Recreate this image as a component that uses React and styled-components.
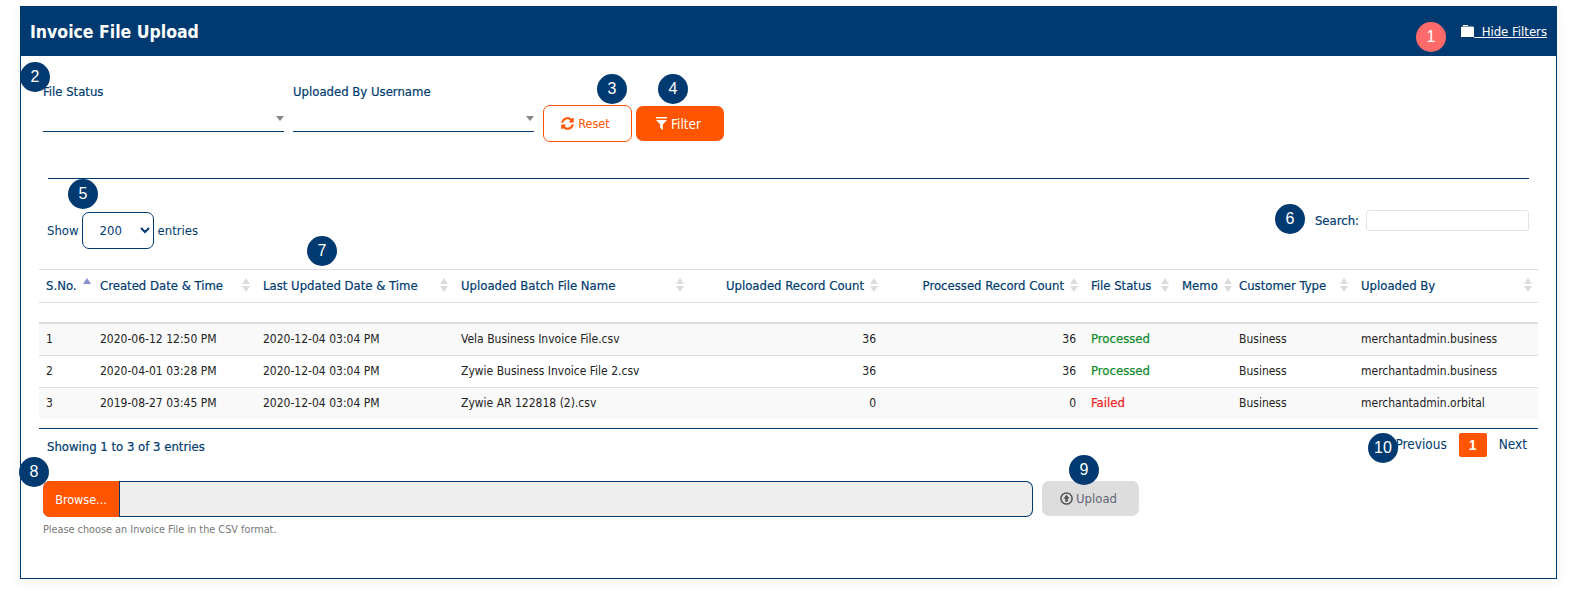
import styled, { createGlobalStyle } from "styled-components";
import { FaSyncAlt } from "react-icons/fa";

const NAVY = "#003a70";
const ORANGE = "#ff5500";

const GlobalStyle = createGlobalStyle`
  html, body { margin: 0; padding: 0; background: #fff; }
  body {
    font-family: "DejaVu Sans Condensed", "DejaVu Sans", sans-serif;
    font-stretch: condensed;
    font-size: 12px;
    color: #222;
  }
`;

const Page = styled.div`
  position: relative;
  width: 1578px;
  height: 601px;
  padding: 6px 21px 0 20px;
  box-sizing: border-box;
  overflow: hidden;
`;

const Panel = styled.section`
  position: relative;
  height: 573px;
  box-sizing: border-box;
  border: 1px solid ${NAVY};
  box-shadow: 0 4px 14px rgba(0, 0, 0, 0.06);
`;

const Header = styled.header`
  height: 49px;
  box-sizing: border-box;
  background: ${NAVY};
  display: flex;
  align-items: center;
  justify-content: space-between;
  padding: 0 9px;
`;

const Title = styled.h1`
  margin: 0;
  color: #fff;
  font-size: 17.5px;
  font-weight: 700;
`;

const HideLink = styled.a`
  color: #fff;
  font-size: 13px;
  text-decoration: underline;
  white-space: pre;
  svg { vertical-align: -1px; }
`;

const FilterRow = styled.div`
  display: flex;
  align-items: flex-start;
  padding: 27px 0 0 22px;
  height: 122px;
  box-sizing: border-box;
`;

const Field = styled.div`
  width: 241px;
  margin-right: 9px;
`;

const FieldLabel = styled.label`
  display: block;
  color: ${NAVY};
  font-size: 13px;
  height: 39px;
  line-height: 18px;
  -webkit-text-stroke: 0.2px ${NAVY};
`;

const FakeSelect = styled.div`
  position: relative;
  height: 9px;
  border-bottom: 1px solid ${NAVY};
  &::after {
    content: "";
    position: absolute;
    right: 0;
    top: -6px;
    border: 4px solid transparent;
    border-top: 5px solid #888;
  }
`;

const ResetButton = styled.button`
  width: 89px;
  height: 37px;
  margin-top: 22px;
  padding: 0 4px 0 0;
  border: 1px solid ${ORANGE};
  border-radius: 7px;
  background: #fff;
  color: ${ORANGE};
  font: inherit;
  font-size: 12.5px;
  display: flex;
  align-items: center;
  justify-content: center;
  gap: 4px;
`;

const FilterButton = styled.button`
  width: 88px;
  height: 35px;
  margin: 23px 0 0 4px;
  padding: 0 3px 0 0;
  border: 0;
  border-radius: 7px;
  background: ${ORANGE};
  color: #fff;
  font: inherit;
  font-size: 13.5px;
  display: flex;
  align-items: center;
  justify-content: center;
  gap: 4px;
`;

const Rule = styled.hr`
  margin: 0 27px;
  border: 0;
  border-top: 1px solid ${NAVY};
`;

const Controls = styled.div`
  display: flex;
  justify-content: space-between;
  padding: 31px 27px 0 26px;
  height: 90px;
  box-sizing: border-box;
  color: ${NAVY};
`;

const Length = styled.div`
  display: flex;
  align-items: center;
  gap: 4px;
  height: 37px;
  margin-top: 2px;
  font-size: 13px;
`;

const LengthSelect = styled.select`
  width: 72px;
  height: 37px;
  margin-left: -1px;
  box-sizing: border-box;
  border: 1px solid ${NAVY};
  border-radius: 7px;
  background: #fff;
  color: ${NAVY};
  font: inherit;
  padding-left: 13px;
`;

const SearchBox = styled.label`
  display: flex;
  align-items: center;
  gap: 7px;
  height: 21px;
  font-size: 13px;
  -webkit-text-stroke: 0.2px ${NAVY};
`;

const SearchInput = styled.input`
  width: 163px;
  height: 21px;
  box-sizing: border-box;
  border: 1px solid #e3e3e3;
  border-radius: 3px;
`;

const TableArea = styled.div`
  padding: 0 18px;
`;

const Table = styled.table`
  width: 1499px;
  table-layout: fixed;
  border-collapse: collapse;
  border-top: 1px solid #ddd;
`;

const HeadCell = styled.th`
  height: 33px;
  padding: 0 6px 2px 7px;
  box-sizing: border-box;
  border-bottom: 1px solid #ddd;
  color: ${NAVY};
  font-size: 13px;
  font-weight: 400;
  -webkit-text-stroke: 0.2px ${NAVY};
  text-align: left;
`;

const HeadInner = styled.div`
  display: flex;
  align-items: center;
  justify-content: ${({ $right }) => ($right ? "flex-end" : "space-between")};
  gap: 6px;
  white-space: nowrap;
`;

const SortIcon = styled.span`
  display: inline-flex;
  flex-direction: column;
  gap: 2px;
  width: 8px;
  flex: none;
  &::before, &::after {
    content: "";
    width: 0;
    height: 0;
    border-left: 4px solid transparent;
    border-right: 4px solid transparent;
  }
  &::before {
    border-bottom: 6px solid ${({ $active }) => ($active ? "#8a8fd0" : "#dcdcdc")};
  }
  &::after {
    border-top: 6px solid ${({ $active }) => ($active ? "transparent" : "#dcdcdc")};
  }
`;

const SpacerCell = styled.td`
  height: 19px;
  padding: 0;
  border-bottom: 2px solid #ddd;
`;

const Row = styled.tr`
  background: ${({ $odd }) => ($odd ? "#f9f9f9" : "#fff")};
  &:not(:last-child) td { border-bottom: 1px solid #ddd; }
`;

const Cell = styled.td`
  height: 32px;
  box-sizing: border-box;
  padding: 0 8px ${({ $status }) => ($status ? "2px" : "0")} 7px;
  color: ${({ $status }) =>
    $status === "Processed" ? "#0a8a2a" : $status === "Failed" ? "#f02020" : "#222"};
  font-size: ${({ $status }) => ($status ? "13px" : "12px")};
  -webkit-text-stroke: ${({ $status }) => ($status ? "0.2px" : "0")};
  text-align: ${({ $right }) => ($right ? "right" : "left")};
  white-space: nowrap;
`;

const TableFoot = styled.div`
  border-top: 1px solid ${NAVY};
  margin-top: 9px;
  display: flex;
  justify-content: space-between;
  padding: 4px 11px 0 8px;
  height: 53px;
  box-sizing: border-box;
  color: ${NAVY};
`;

const Info = styled.div`
  font-size: 13px;
  -webkit-text-stroke: 0.2px ${NAVY};
  padding-top: 6px;
`;

const Pager = styled.nav`
  display: flex;
  align-items: center;
  height: 24px;
  gap: 12px;
  font-size: 13.5px;
`;

const PageLink = styled.span`
  margin-bottom: 2px;
`;

const PageCurrent = styled.span`
  width: 28px;
  height: 24px;
  border-radius: 2px;
  background: ${ORANGE};
  color: #fff;
  font-family: "Liberation Sans", sans-serif;
  font-size: 14px;
  font-weight: 700;
  display: flex;
  align-items: center;
  justify-content: center;
`;

const UploadRow = styled.div`
  display: flex;
  align-items: flex-start;
  padding: 0 0 0 22px;
  gap: 9px;
`;

const FileBox = styled.div`
  width: 990px;
  height: 36px;
  box-sizing: border-box;
  display: flex;
  border: 1px solid ${NAVY};
  border-left: 0;
  border-radius: 7px;
  background: #eee;
`;

const BrowseButton = styled.span`
  width: 76px;
  margin: -1px 0;
  border-right: 1px solid ${NAVY};
  border-radius: 7px 0 0 7px;
  background: ${ORANGE};
  color: #fff;
  font-size: 12.5px;
  display: flex;
  align-items: center;
  justify-content: center;
`;

const UploadButton = styled.button`
  width: 97px;
  height: 35px;
  padding: 0 4px 0 0;
  border: 0;
  border-radius: 7px;
  background: #ddd;
  color: #66667a;
  font: inherit;
  font-size: 13px;
  display: flex;
  align-items: center;
  justify-content: center;
  gap: 3px;
`;

const HelpText = styled.p`
  margin: 6px 0 0 22px;
  color: #777;
  font-size: 10.8px;
`;

const Badge = styled.span`
  position: absolute;
  left: ${({ $x }) => $x}px;
  top: ${({ $y }) => $y}px;
  width: 30px;
  height: 30px;
  border-radius: 50%;
  background: ${({ $red }) => ($red ? "#ff6b6b" : NAVY)};
  color: #fff;
  font-family: "Liberation Sans", sans-serif;
  font-size: 16px;
  display: flex;
  align-items: center;
  justify-content: center;
`;

const FolderIcon = () => (
  <svg width="13" height="12" viewBox="0 0 13 12" fill="#fff">
    <path d="M2 0h5v1H2zM0 2h13v10H0z" />
    <path d="M1 1h11v.5H1z" />
  </svg>
);

const FunnelIcon = () => (
  <svg width="11" height="13" viewBox="0 0 11 13" fill="#fff">
    <path d="M0 0h11v1.5H0zM0 3h11L6.8 7.6V13L4.2 11V7.6z" />
  </svg>
);

const UploadIcon = () => (
  <svg width="13" height="13" viewBox="0 0 13 13">
    <circle cx="6.5" cy="6.5" r="5.6" fill="none" stroke="#555" strokeWidth="1.5" />
    <path d="M6.5 2.8L9.6 6.4H7.8V9.8H5.2V6.4H3.4z" fill="#555" />
  </svg>
);

const columns = [
  { label: "S.No.", width: 54, active: true },
  { label: "Created Date & Time", width: 163 },
  { label: "Last Updated Date & Time", width: 198 },
  { label: "Uploaded Batch File Name", width: 236 },
  { label: "Uploaded Record Count", width: 194, right: true },
  { label: "Processed Record Count", width: 200, right: true },
  { label: "File Status", width: 91 },
  { label: "Memo", width: 57 },
  { label: "Customer Type", width: 122 },
  { label: "Uploaded By", width: 184 },
];

const rows = [
  ["1", "2020-06-12 12:50 PM", "2020-12-04 03:04 PM", "Vela Business Invoice File.csv", "36", "36", "Processed", "", "Business", "merchantadmin.business"],
  ["2", "2020-04-01 03:28 PM", "2020-12-04 03:04 PM", "Zywie Business Invoice File 2.csv", "36", "36", "Processed", "", "Business", "merchantadmin.business"],
  ["3", "2019-08-27 03:45 PM", "2020-12-04 03:04 PM", "Zywie AR 122818 (2).csv", "0", "0", "Failed", "", "Business", "merchantadmin.orbital"],
];

const badges = [
  { n: 1, x: 1416, y: 22, red: true },
  { n: 2, x: 20, y: 62 },
  { n: 3, x: 597, y: 74 },
  { n: 4, x: 658, y: 74 },
  { n: 5, x: 68, y: 179 },
  { n: 6, x: 1275, y: 204 },
  { n: 7, x: 307, y: 236 },
  { n: 8, x: 19, y: 457 },
  { n: 9, x: 1069, y: 455 },
  { n: 10, x: 1368, y: 433 },
];

export default function App() {
  return (
    <Page>
      <GlobalStyle />
      <Panel>
        <Header>
          <Title>Invoice File Upload</Title>
          <HideLink href="#"><FolderIcon />{"  Hide Filters"}</HideLink>
        </Header>
        <FilterRow>
          <Field>
            <FieldLabel>File Status</FieldLabel>
            <FakeSelect />
          </Field>
          <Field>
            <FieldLabel>Uploaded By Username</FieldLabel>
            <FakeSelect />
          </Field>
          <ResetButton><FaSyncAlt size={13} /> Reset</ResetButton>
          <FilterButton><FunnelIcon /> Filter</FilterButton>
        </FilterRow>
        <Rule />
        <Controls>
          <Length>
            Show
            <LengthSelect defaultValue="200">
              <option>200</option>
            </LengthSelect>
            entries
          </Length>
          <SearchBox>
            Search:
            <SearchInput />
          </SearchBox>
        </Controls>
        <TableArea>
          <Table>
            <colgroup>
              {columns.map((c) => <col key={c.label} width={c.width} />)}
            </colgroup>
            <thead>
              <tr>
                {columns.map((c) => (
                  <HeadCell key={c.label}>
                    <HeadInner $right={c.right}>
                      {c.label}
                      <SortIcon $active={c.active} />
                    </HeadInner>
                  </HeadCell>
                ))}
              </tr>
              <tr><SpacerCell colSpan={10} /></tr>
            </thead>
            <tbody>
              {rows.map((r, i) => (
                <Row key={r[0]} $odd={i % 2 === 0}>
                  {r.map((v, j) => (
                    <Cell key={j} $right={columns[j].right} $status={j === 6 ? v : undefined}>{v}</Cell>
                  ))}
                </Row>
              ))}
            </tbody>
          </Table>
          <TableFoot>
            <Info>Showing 1 to 3 of 3 entries</Info>
            <Pager>
              <PageLink>Previous</PageLink>
              <PageCurrent>1</PageCurrent>
              <PageLink>Next</PageLink>
            </Pager>
          </TableFoot>
        </TableArea>
        <UploadRow>
          <FileBox><BrowseButton>Browse...</BrowseButton></FileBox>
          <UploadButton><UploadIcon /> Upload</UploadButton>
        </UploadRow>
        <HelpText>Please choose an Invoice File in the CSV format.</HelpText>
      </Panel>
      {badges.map((b) => (
        <Badge key={b.n} $x={b.x} $y={b.y} $red={b.red}>{b.n}</Badge>
      ))}
    </Page>
  );
}
